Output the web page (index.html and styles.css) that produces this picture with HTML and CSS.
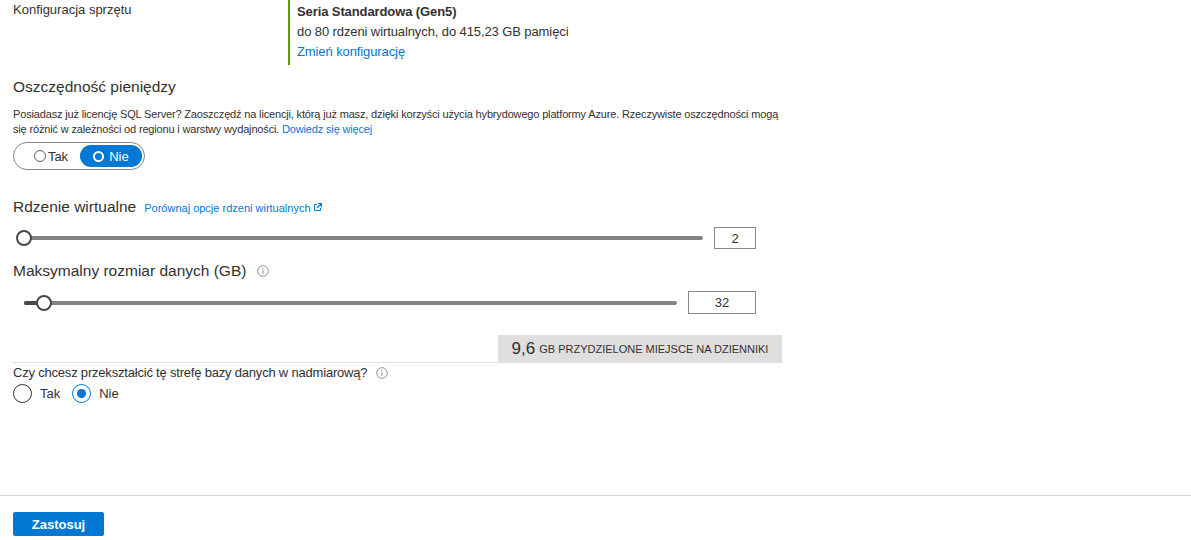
FILE: index.html
```html
<!DOCTYPE html>
<html lang="pl">
<head>
<meta charset="utf-8">
<title>Konfiguracja</title>
<link rel="stylesheet" href="styles.css">
</head>
<body>
<div class="page">
  <main class="main">
    <div class="hw-row">
      <div class="hw-label">Konfiguracja sprzętu</div>
      <div class="hw-value">
        <div class="hw-title">Seria Standardowa (Gen5)</div>
        <div>do 80 rdzeni wirtualnych, do 415,23 GB pamięci</div>
        <a class="link" href="#">Zmień konfigurację</a>
      </div>
    </div>

    <h2 class="section-title savings-title">Oszczędność pieniędzy</h2>
    <p class="desc">Posiadasz już licencję SQL Server? Zaoszczędź na licencji, którą już masz, dzięki korzyści użycia hybrydowego platformy Azure. Rzeczywiste oszczędności mogą<br>się różnić w zależności od regionu i warstwy wydajności. <a class="link" href="#">Dowiedz się więcej</a></p>

    <div class="toggle">
      <span class="toggle-opt"><span class="toggle-dot"></span>Tak</span>
      <span class="toggle-opt selected"><span class="toggle-dot"></span>Nie</span>
    </div>

    <div class="heading-row vcore-title">
      <h2 class="section-title">Rdzenie wirtualne</h2>
      <a class="small-link" href="#">Porównaj opcje rdzeni wirtualnych<svg class="ext" width="9" height="9" viewBox="0 0 9 9"><path d="M4 1.5H1.5v6h6V5" fill="none" stroke="#0078d4" stroke-width="1"/><path d="M5 0.5h3.5V4M8.5 0.5L4 5" fill="none" stroke="#0078d4" stroke-width="1.2"/></svg></a>
    </div>

    <div class="slider-row slider-vcore">
      <div class="slider">
        <div class="track"></div>
        <div class="fill" style="width:7px"></div>
        <div class="thumb" style="left:7px"></div>
      </div>
      <div class="num-box vcore-box">2</div>
    </div>

    <div class="heading-row size-title">
      <h2 class="section-title">Maksymalny rozmiar danych (GB)</h2>
      <svg class="info" width="12" height="12" viewBox="0 0 12 12"><circle cx="6" cy="6" r="5.3" fill="none" stroke="#8a8886" stroke-width="0.9"/><path d="M6 5.2v3.6" stroke="#8a8886" stroke-width="1"/><circle cx="6" cy="3.6" r="0.65" fill="#8a8886"/></svg>
    </div>

    <div class="slider-row slider-size">
      <div class="slider">
        <div class="track"></div>
        <div class="fill" style="width:20px"></div>
        <div class="thumb" style="left:20px"></div>
      </div>
      <div class="num-box size-box">32</div>
    </div>

    <div class="log-row">
      <div class="log-box"><span class="log-num">9,6</span> <span class="log-text">GB PRZYDZIELONE MIEJSCE NA DZIENNIKI</span></div>
    </div>

    <div class="question">Czy chcesz przekształcić tę strefę bazy danych w nadmiarową?<svg class="info q-info" width="12" height="12" viewBox="0 0 12 12"><circle cx="6" cy="6" r="5.3" fill="none" stroke="#8a8886" stroke-width="0.9"/><path d="M6 5.2v3.6" stroke="#8a8886" stroke-width="1"/><circle cx="6" cy="3.6" r="0.65" fill="#8a8886"/></svg></div>
    <div class="radios">
      <label class="radio"><span class="radio-circle"></span>Tak</label>
      <label class="radio"><span class="radio-circle checked"></span>Nie</label>
    </div>
  </main>
  <footer class="footer">
    <button class="btn-primary" type="button">Zastosuj</button>
  </footer>
</div>
</body>
</html>
```

FILE: styles.css
```css
* { box-sizing: border-box; }
html, body { margin: 0; padding: 0; }
body {
  font-family: "Liberation Sans", Arial, sans-serif;
  font-size: 13px;
  color: #323130;
  background: #fff;
  width: 1191px;
  height: 540px;
  overflow: hidden;
}
.page {
  display: flex;
  flex-direction: column;
  height: 540px;
}
.main {
  flex: 1;
  padding: 0 13px;
}
.link { color: #0078d4; text-decoration: none; }

.hw-row { display: flex; line-height: 20px; }
.hw-label { width: 275px; }
.hw-value {
  border-left: 2px solid #57a300;
  padding: 2px 0 3px 7px;
  letter-spacing: -0.1px;
}
.hw-title { font-weight: bold; }

.section-title {
  margin: 0;
  font-size: 15.5px;
  font-weight: normal;
  line-height: 20px;
}
.savings-title { margin-top: 12px; }
.desc {
  margin: 10px 0 0;
  font-size: 11px;
  line-height: 15px;
  letter-spacing: -0.16px;
}
.desc .link { font-size: 11px; }

.toggle {
  margin-top: 5px;
  width: 132px;
  height: 28px;
  border: 1px solid #8a8886;
  border-radius: 14px;
  display: flex;
  align-items: center;
  padding: 0 2px;
}
.toggle-opt {
  flex: 1;
  height: 22px;
  display: flex;
  align-items: center;
  justify-content: center;
  font-size: 13px;
  border-radius: 11px;
  gap: 2px;
}
.toggle-opt:first-child { padding-left: 6px; }
.toggle-opt.selected {
  flex: 0 0 62px;
  background: #0078d4;
  color: #fff;
  gap: 5px;
}
.toggle-dot {
  width: 12px;
  height: 12px;
  border: 1px solid #605e5c;
  border-radius: 50%;
}
.selected .toggle-dot {
  width: 11px;
  height: 11px;
  border: 2px solid #fff;
}

.heading-row {
  display: flex;
  align-items: baseline;
  gap: 8px;
}
.vcore-title { margin-top: 27px; }
.small-link {
  color: #0078d4;
  text-decoration: none;
  font-size: 11px;
}
.ext { margin-left: 2px; vertical-align: 0; }
.size-title { margin-top: 12px; gap: 11px; }
.info { align-self: center; }

.slider-row {
  width: 743px;
  display: flex;
  align-items: center;
  gap: 11px;
}
.slider-vcore { margin-top: 10px; height: 22px; padding-left: 4px; }
.slider-size { margin-top: 10px; height: 23px; padding-left: 11px; }
.slider {
  position: relative;
  flex: 1;
  height: 18px;
}
.track {
  position: absolute;
  left: 0; right: 0; top: 7px;
  height: 4px;
  border-radius: 2px;
  background: #858381;
}
.fill {
  position: absolute;
  left: 0; top: 7px;
  height: 4px;
  border-radius: 2px;
  background: #4a4846;
}
.thumb {
  position: absolute;
  top: 1px;
  width: 16px;
  height: 16px;
  margin-left: -8px;
  border: 2px solid #4a4846;
  border-radius: 50%;
  background: #fff;
}
.num-box {
  height: 100%;
  border: 1px solid #8a8886;
  display: flex;
  align-items: center;
  justify-content: center;
  font-size: 13px;
}
.vcore-box { width: 42px; }
.size-box { width: 68px; }

.log-row {
  margin-top: 21px;
  width: 769px;
  display: flex;
  justify-content: flex-end;
  border-bottom: 1px solid #e1dfdd;
}
.log-box {
  width: 284px;
  height: 27px;
  background: #e1dfdd;
  display: flex;
  align-items: center;
  justify-content: center;
  gap: 4px;
}
.log-num { font-size: 17px; }
.log-text { font-size: 11px; }

.question {
  line-height: 20px;
  display: flex;
  align-items: center;
  letter-spacing: -0.2px;
}
.q-info { margin-left: 9px; }
.radios {
  display: flex;
  gap: 12px;
  height: 21px;
  align-items: center;
}
.radio {
  display: flex;
  align-items: center;
  gap: 8px;
}
.radio-circle {
  width: 19px;
  height: 19px;
  border: 1px solid #323130;
  border-radius: 50%;
  display: flex;
  align-items: center;
  justify-content: center;
}
.radio-circle.checked { border-color: #0078d4; }
.radio-circle.checked::after {
  content: "";
  width: 9px;
  height: 9px;
  border-radius: 50%;
  background: #0078d4;
}

.footer {
  border-top: 1px solid #d6d6d6;
  padding: 16px 13px 4px;
}
.btn-primary {
  width: 91px;
  height: 24px;
  border: 0;
  border-radius: 2px;
  background: #0078d4;
  color: #fff;
  font-family: inherit;
  font-size: 13px;
  font-weight: bold;
}
```
